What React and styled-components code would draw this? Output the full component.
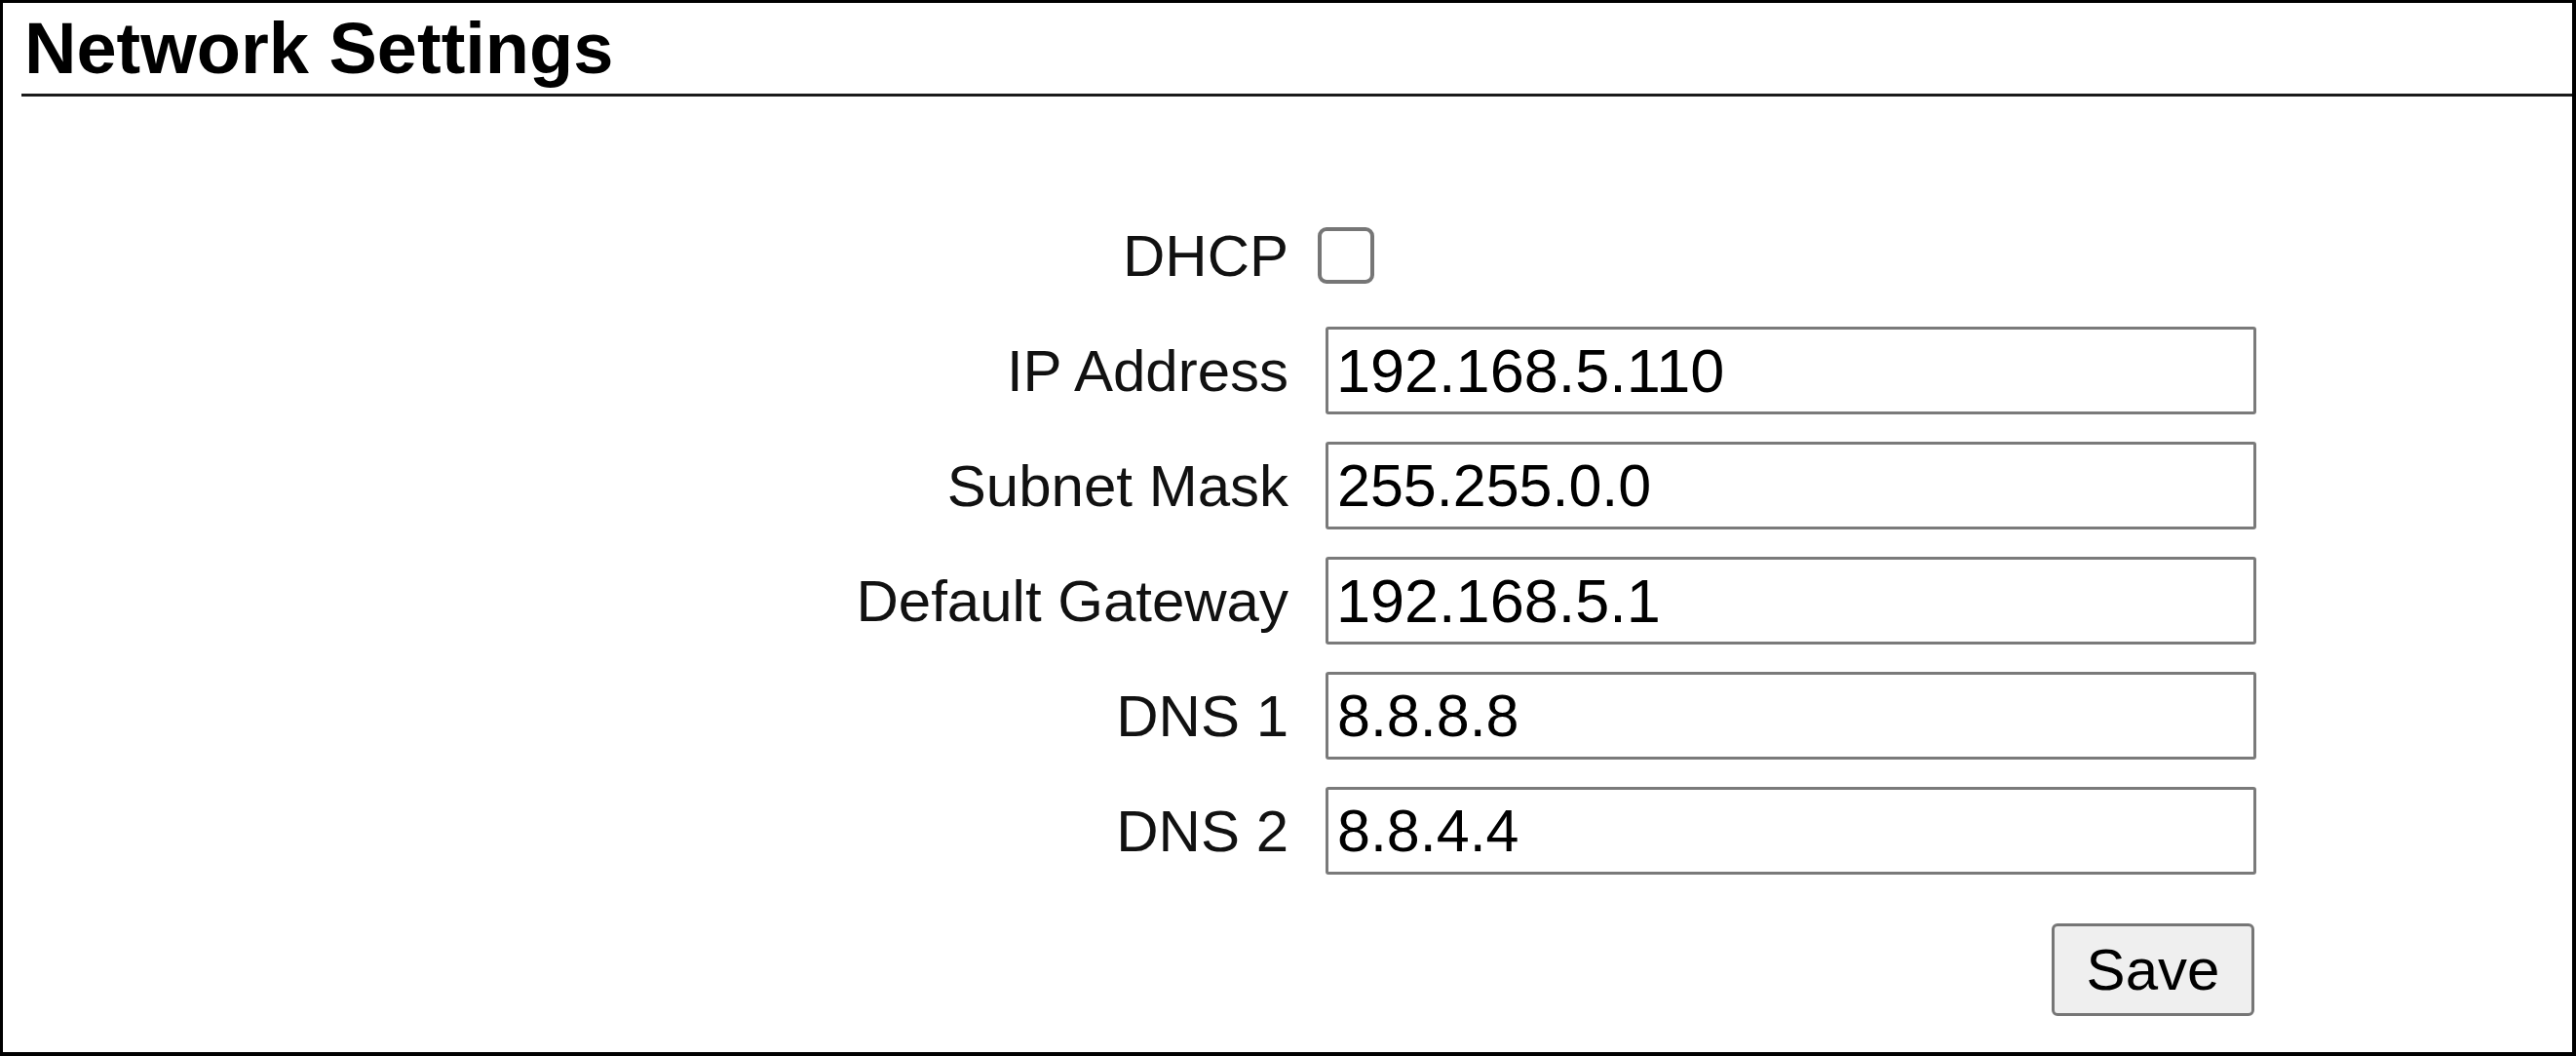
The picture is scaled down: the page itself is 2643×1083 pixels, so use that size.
import React from "react";
import styled, { createGlobalStyle } from "styled-components";

const GlobalStyle = createGlobalStyle`
  html, body {
    margin: 0;
    padding: 0;
    background: #fff;
  }
  body {
    font-family: "Liberation Sans", Arial, sans-serif;
    color: #000;
  }
`;

const Page = styled.div`
  width: 2643px;
  height: 1083px;
  box-sizing: border-box;
  border: 3px solid #000;
  border-right-width: 4px;
  border-bottom-width: 4px;
  display: flex;
  flex-direction: column;
  background: #fff;
`;

const Header = styled.div`
  margin-left: 19px;
  border-bottom: 3px solid #1a1a1a;

  h1 {
    margin: 0;
    padding-left: 3px;
    font-size: 74px;
    font-weight: bold;
    line-height: 93px;
  }
`;

const Form = styled.form`
  display: grid;
  grid-template-columns: 1fr 955px;
  grid-auto-rows: 90px;
  column-gap: 38px;
  row-gap: 28px;
  margin-top: 118px;
  padding-right: 324px;
`;

const Label = styled.label`
  display: flex;
  align-items: center;
  justify-content: flex-end;
  font-size: 60px;
  color: #111;
  white-space: nowrap;
`;

const Field = styled.div`
  display: flex;
  align-items: center;
`;

const Check = styled.input`
  appearance: none;
  width: 58px;
  height: 58px;
  margin: 0 0 0 -8px;
  box-sizing: border-box;
  border: 4px solid #767676;
  border-radius: 9px;
  background: #fff;
`;

const Text = styled.input`
  width: 100%;
  height: 90px;
  box-sizing: border-box;
  margin: 0;
  padding: 0 0 0 ${(p) => (p.$big ? "8px" : "9px")};
  border: 3px solid #7a7a7a;
  border-radius: 3px;
  font-family: "Liberation Sans", Arial, sans-serif;
  font-size: ${(p) => (p.$big ? "63px" : "61px")};
  color: #000;
  background: #fff;
  outline: none;
`;

const Actions = styled.div`
  grid-column: 1 / -1;
  display: flex;
  justify-content: flex-end;
  align-items: flex-start;
  margin-top: 22px;
  padding-right: 2px;
`;

const Button = styled.button`
  width: 208px;
  height: 95px;
  box-sizing: border-box;
  border: 3px solid #767676;
  border-radius: 6px;
  background: #efefef;
  font-family: "Liberation Sans", Arial, sans-serif;
  font-size: 60px;
  color: #000;
  padding: 0;
`;

const fields = [
  { label: "IP Address", value: "192.168.5.110", big: true },
  { label: "Subnet Mask", value: "255.255.0.0" },
  { label: "Default Gateway", value: "192.168.5.1", big: true },
  { label: "DNS 1", value: "8.8.8.8" },
  { label: "DNS 2", value: "8.8.4.4" },
];

const App = () => {
  return (
    <Page>
      <GlobalStyle />
      <Header>
        <h1>Network Settings</h1>
      </Header>
      <Form onSubmit={(e) => e.preventDefault()}>
        <Label htmlFor="dhcp">DHCP</Label>
        <Field>
          <Check type="checkbox" id="dhcp" />
        </Field>
        {fields.map((f) => (
          <React.Fragment key={f.label}>
            <Label>{f.label}</Label>
            <Field>
              <Text $big={f.big} defaultValue={f.value} />
            </Field>
          </React.Fragment>
        ))}
        <Actions>
          <Button type="submit">Save</Button>
        </Actions>
      </Form>
    </Page>
  );
};

export default App;
